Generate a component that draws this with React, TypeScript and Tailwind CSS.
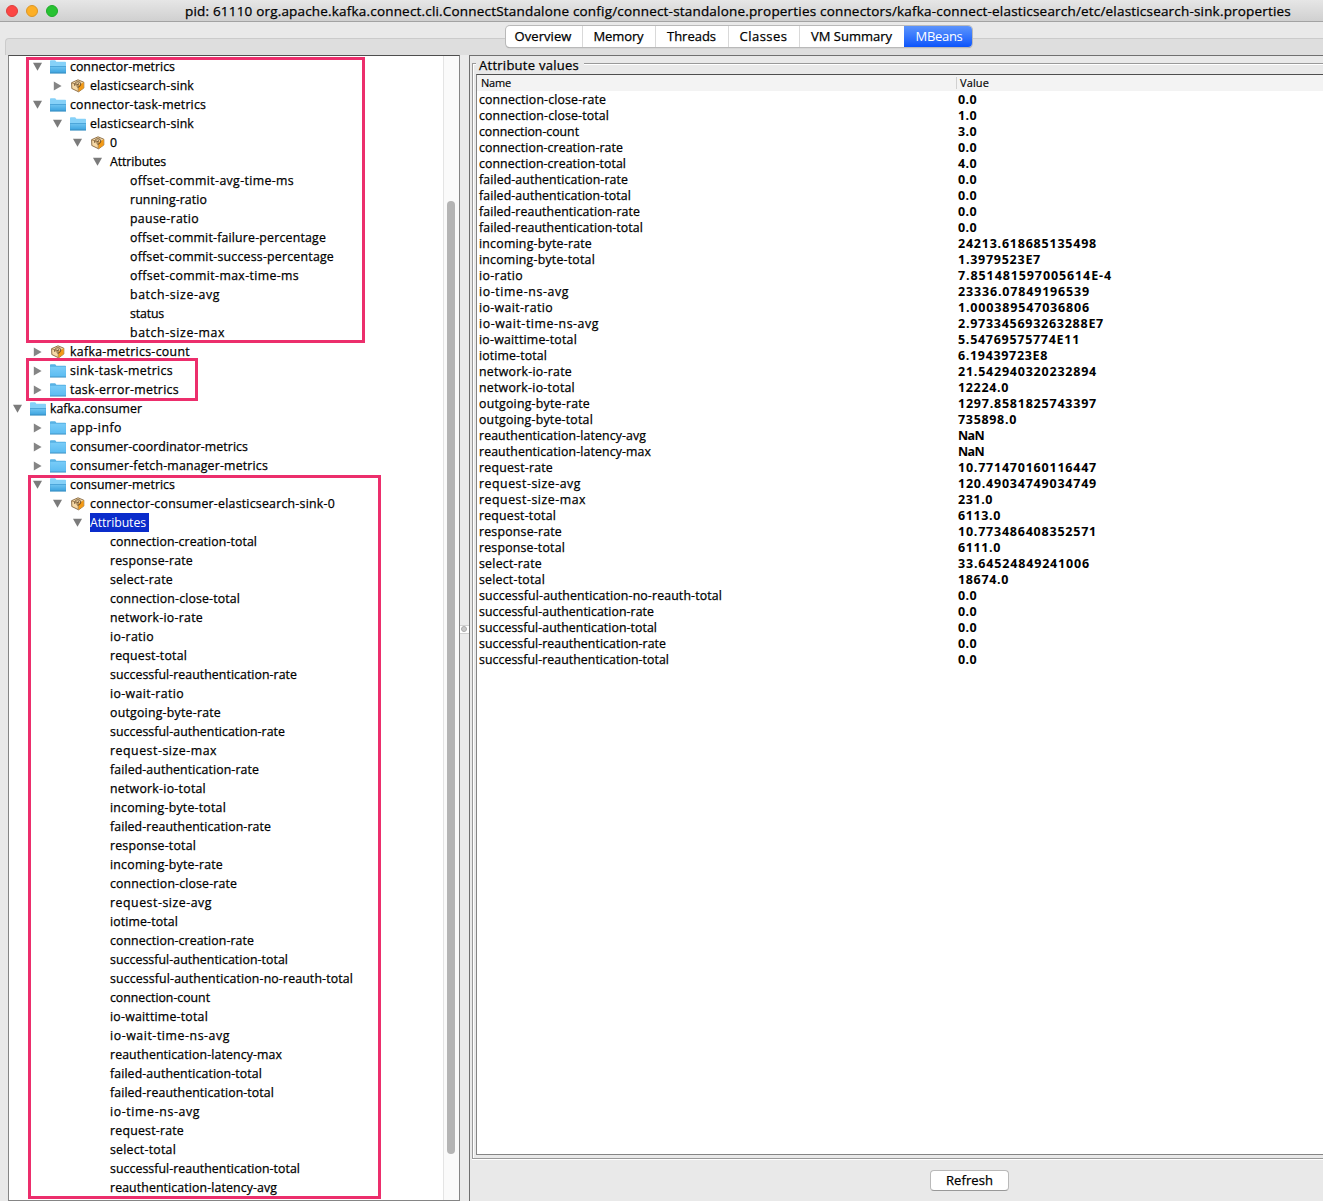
import { useLayoutEffect, useRef, useState } from "react";

type Icon = "open" | "closed" | "bean" | "none";
type Arrow = "down" | "right" | "none";

/* Text whose tracking is adjusted so that it fills the given width. */
function FitText({ text, width, className = "" }: { text: string; width: number; className?: string }) {
  const ref = useRef<HTMLSpanElement>(null);
  const [spacing, setSpacing] = useState(0);
  useLayoutEffect(() => {
    if (ref.current) {
      const natural = ref.current.getBoundingClientRect().width;
      setSpacing((width - natural) / text.length);
    }
  }, [text, width]);
  return (
    <span ref={ref} className={`whitespace-pre ${className}`} style={{ letterSpacing: `${spacing}px` }}>
      {text}
    </span>
  );
}

function Folder({ open }: { open: boolean }) {
  return (
    <svg width="16" height="14" viewBox="0 0 16 14" className="shrink-0">
      <defs>
        <linearGradient id="folderClosed" x1="0" y1="0" x2="0" y2="1">
          <stop offset="0" stopColor="#79ccf8" />
          <stop offset="1" stopColor="#5cbcf1" />
        </linearGradient>
        <linearGradient id="folderOpen" x1="0" y1="0" x2="0" y2="1">
          <stop offset="0" stopColor="#6cc2f0" />
          <stop offset="1" stopColor="#3fa5e0" />
        </linearGradient>
      </defs>
      <path d="M0 .9Q0 .2 .8 .2H5.2L6.4 1.7H15.2Q16 1.7 16 2.5V13.2H0Z" fill={open ? "#86d1f8" : "#58b2e4"} />
      {open ? (
        <>
          <path d="M0 6.2H16V13.2H0Z" fill="#3f9cd2" />
          <path d="M.2 7H15.8V12.6H.2Z" fill="url(#folderOpen)" />
        </>
      ) : (
        <path d="M.2 2.8H15.8V12.6H.2Z" fill="url(#folderClosed)" />
      )}
      <path d="M0 12.7H16V13.4H0Z" fill="#3687b8" />
    </svg>
  );
}

function Bean() {
  return (
    <svg width="14" height="14" viewBox="0 0 14 14" className="ml-px shrink-0">
      <path d="M.6 3.7 7 .8 12.8 3.2V9L7.6 12.8.8 9.5Z" fill="#f6d9a7" stroke="#76542a" strokeWidth=".8" strokeLinejoin="round" />
      <path d="M7.4 6.4 12.7 3.3V9L7.5 12.7Z" fill="#f39a16" />
      <path d="M.8 3.8 7.2 6.5V12.5" fill="none" stroke="#936a36" strokeWidth=".7" />
      <path d="M3.8 6.9C3.1 4.3 4.8 2.8 7 2.8s3.5 1.5 2.5 3.6c-.8 1.8-2.7 2.2-3.8 1.1" fill="none" stroke="#5b4326" strokeWidth=".9" />
      <path d="M5 4.8 8.4 6M8.4 3.7 5.8 6.6" stroke="#6b4f2e" strokeWidth=".8" />
    </svg>
  );
}

function Disclosure({ dir }: { dir: Arrow }) {
  return (
    <svg width="10" height="10" viewBox="0 0 10 10" className="shrink-0">
      {dir === "down" && <path d="M1 .8H10L5.5 8.8Z" fill="#7b7b7b" />}
      {dir === "right" && <path d="M1.8 .6V9.4L9.6 5Z" fill="#858585" />}
    </svg>
  );
}

/* [label x, label right edge, label, icon, arrow] */
const nodes: [number, number, string, Icon, Arrow][] = [
  [70, 175, "connector-metrics", "open", "down"],
  [90, 194, "elasticsearch-sink", "bean", "right"],
  [70, 206, "connector-task-metrics", "open", "down"],
  [90, 194, "elasticsearch-sink", "open", "down"],
  [110, 118, "0", "bean", "down"],
  [110, 166, "Attributes", "none", "down"],
  [130, 294, "offset-commit-avg-time-ms", "none", "none"],
  [130, 207, "running-ratio", "none", "none"],
  [130, 199, "pause-ratio", "none", "none"],
  [130, 326, "offset-commit-failure-percentage", "none", "none"],
  [130, 334, "offset-commit-success-percentage", "none", "none"],
  [130, 299, "offset-commit-max-time-ms", "none", "none"],
  [130, 220, "batch-size-avg", "none", "none"],
  [130, 164, "status", "none", "none"],
  [130, 225, "batch-size-max", "none", "none"],
  [70, 190, "kafka-metrics-count", "bean", "right"],
  [70, 173, "sink-task-metrics", "closed", "right"],
  [70, 179, "task-error-metrics", "closed", "right"],
  [50, 142, "kafka.consumer", "open", "down"],
  [70, 122, "app-info", "closed", "right"],
  [70, 248, "consumer-coordinator-metrics", "closed", "right"],
  [70, 268, "consumer-fetch-manager-metrics", "closed", "right"],
  [70, 175, "consumer-metrics", "open", "down"],
  [90, 335, "connector-consumer-elasticsearch-sink-0", "bean", "down"],
  [90, 146, "Attributes", "none", "down"],
  [110, 257, "connection-creation-total", "none", "none"],
  [110, 193, "response-rate", "none", "none"],
  [110, 173, "select-rate", "none", "none"],
  [110, 240, "connection-close-total", "none", "none"],
  [110, 203, "network-io-rate", "none", "none"],
  [110, 154, "io-ratio", "none", "none"],
  [110, 187, "request-total", "none", "none"],
  [110, 297, "successful-reauthentication-rate", "none", "none"],
  [110, 184, "io-wait-ratio", "none", "none"],
  [110, 221, "outgoing-byte-rate", "none", "none"],
  [110, 285, "successful-authentication-rate", "none", "none"],
  [110, 217, "request-size-max", "none", "none"],
  [110, 259, "failed-authentication-rate", "none", "none"],
  [110, 206, "network-io-total", "none", "none"],
  [110, 226, "incoming-byte-total", "none", "none"],
  [110, 271, "failed-reauthentication-rate", "none", "none"],
  [110, 196, "response-total", "none", "none"],
  [110, 223, "incoming-byte-rate", "none", "none"],
  [110, 237, "connection-close-rate", "none", "none"],
  [110, 212, "request-size-avg", "none", "none"],
  [110, 178, "iotime-total", "none", "none"],
  [110, 254, "connection-creation-rate", "none", "none"],
  [110, 288, "successful-authentication-total", "none", "none"],
  [110, 353, "successful-authentication-no-reauth-total", "none", "none"],
  [110, 210, "connection-count", "none", "none"],
  [110, 208, "io-waittime-total", "none", "none"],
  [110, 230, "io-wait-time-ns-avg", "none", "none"],
  [110, 282, "reauthentication-latency-max", "none", "none"],
  [110, 262, "failed-authentication-total", "none", "none"],
  [110, 274, "failed-reauthentication-total", "none", "none"],
  [110, 200, "io-time-ns-avg", "none", "none"],
  [110, 184, "request-rate", "none", "none"],
  [110, 176, "select-total", "none", "none"],
  [110, 300, "successful-reauthentication-total", "none", "none"],
  [110, 277, "reauthentication-latency-avg", "none", "none"],
];

/* [name, name width, value, value width] */
const values: [string, number, string, number][] = [
  ["connection-close-rate", 127, "0.0", 19],
  ["connection-close-total", 130, "1.0", 19],
  ["connection-count", 100, "3.0", 19],
  ["connection-creation-rate", 144, "0.0", 19],
  ["connection-creation-total", 147, "4.0", 19],
  ["failed-authentication-rate", 149, "0.0", 19],
  ["failed-authentication-total", 152, "0.0", 19],
  ["failed-reauthentication-rate", 161, "0.0", 19],
  ["failed-reauthentication-total", 164, "0.0", 19],
  ["incoming-byte-rate", 113, "24213.618685135498", 139],
  ["incoming-byte-total", 116, "1.3979523E7", 83],
  ["io-ratio", 44, "7.851481597005614E-4", 154],
  ["io-time-ns-avg", 90, "23336.07849196539", 132],
  ["io-wait-ratio", 74, "1.000389547036806", 132],
  ["io-wait-time-ns-avg", 120, "2.973345693263288E7", 146],
  ["io-waittime-total", 98, "5.54769575774E11", 122],
  ["iotime-total", 68, "6.19439723E8", 90],
  ["network-io-rate", 93, "21.542940320232894", 139],
  ["network-io-total", 96, "12224.0", 51],
  ["outgoing-byte-rate", 111, "1297.8581825743397", 139],
  ["outgoing-byte-total", 114, "735898.0", 59],
  ["reauthentication-latency-avg", 167, "NaN", 26],
  ["reauthentication-latency-max", 172, "NaN", 26],
  ["request-rate", 74, "10.771470160116447", 139],
  ["request-size-avg", 102, "120.49034749034749", 139],
  ["request-size-max", 107, "231.0", 35],
  ["request-total", 77, "6113.0", 43],
  ["response-rate", 83, "10.773486408352571", 139],
  ["response-total", 86, "6111.0", 43],
  ["select-rate", 63, "33.64524849241006", 132],
  ["select-total", 66, "18674.0", 51],
  ["successful-authentication-no-reauth-total", 243, "0.0", 19],
  ["successful-authentication-rate", 175, "0.0", 19],
  ["successful-authentication-total", 178, "0.0", 19],
  ["successful-reauthentication-rate", 187, "0.0", 19],
  ["successful-reauthentication-total", 190, "0.0", 19],
];

const tabs = [
  { label: "Overview", text: 57, cell: "w-[77px]" },
  { label: "Memory", text: 50, cell: "w-[73px] pl-px" },
  { label: "Threads", text: 49, cell: "w-[73px] pl-px" },
  { label: "Classes", text: 48, cell: "w-[71px] pl-px" },
  { label: "VM Summary", text: 81, cell: "w-[105px] pl-px" },
];

function TreeRow({ node, selected }: { node: (typeof nodes)[number]; selected: boolean }) {
  const [x, end, label, icon, arrow] = node;
  const lead = x - 9 - (icon === "none" ? 18 : 38);
  return (
    <div className="flex h-[19px] items-center" style={{ paddingLeft: lead }}>
      <Disclosure dir={arrow} />
      {icon !== "none" && (
        <span className="ml-2 flex w-5 items-center">{icon === "bean" ? <Bean /> : <Folder open={icon === "open"} />}</span>
      )}
      {icon === "none" && <span className="w-2 shrink-0" />}
      <span className={selected ? "flex h-[19px] w-[59px] items-center bg-[#0a2ccb] text-white [-webkit-text-stroke:0]" : "flex items-center"}>
        <FitText text={label} width={end - x} />
      </span>
    </div>
  );
}

export default function App() {
  return (
    <div className="flex h-[1201px] w-[1323px] flex-col overflow-hidden bg-[#e9e9e9] font-['Open_Sans',sans-serif] text-[12.3px] leading-4 text-black [-webkit-text-stroke:0.25px]">
      <header className="flex h-[22px] shrink-0 items-center border-b border-[#a3a3a3] bg-linear-to-b from-[#e6e6e6] to-[#d0d0d0] pl-1.5">
        <div className="flex w-[179px] gap-2">
          <span className="size-3 rounded-full border border-[#de3e3b] bg-[#fc4644]" />
          <span className="size-3 rounded-full border border-[#dc9625] bg-[#fdaf26]" />
          <span className="size-3 rounded-full border border-[#1eab29] bg-[#28c232]" />
        </div>
        <FitText
          className="pt-px text-[13.5px] leading-5"
          width={1106}
          text="pid: 61110 org.apache.kafka.connect.cli.ConnectStandalone config/connect-standalone.properties connectors/kafka-connect-elasticsearch/etc/elasticsearch-sink.properties"
        />
      </header>

      <div className="relative h-4 shrink-0">
        <nav className="absolute top-1 left-[506px] z-10 flex h-[21px] w-[466px] overflow-hidden rounded-[4px] bg-white text-[13px] shadow-[0_0_0_1px_#b9b9b9,0_1px_1px_#888]">
          {tabs.map((t) => (
            <div key={t.label} className={`flex shrink-0 items-center justify-center border-r border-[#d9d9d9] pr-0.5 pb-0.5 ${t.cell}`}>
              <FitText text={t.label} width={t.text} />
            </div>
          ))}
          <div className="-ml-px flex flex-1 items-center justify-center bg-linear-to-b from-[#5c94fc] to-[#0a53fb] pb-0.5 pl-0.5 text-white [-webkit-text-stroke:0]">
            <FitText text="MBeans" width={47} />
          </div>
        </nav>
      </div>

      <main className="ml-[5px] flex min-h-0 flex-1 flex-col rounded-tl-[4px] border-t border-l border-[#cbcbcb] bg-[#dedede] pt-4">
        <div className="-ml-px flex min-h-0 flex-1 bg-[#e9e9e9] pl-[3px]">
          <section className="relative flex h-[1146px] w-[452px] shrink-0 border border-[#858585] border-t-[#4e4e4e] bg-white">
            <div className="flex-1 pt-px">
              {nodes.map((n, i) => (
                <TreeRow key={i} node={n} selected={i === 24} />
              ))}
            </div>
            <div className="flex w-4 justify-center border-l border-[#e4e4e4] bg-[#fafafa] pt-[145px] pr-px">
              <span className="h-[953px] w-2 rounded-full bg-[#b4b4b4]" />
            </div>
            <div className="absolute top-px left-[17px] h-[286px] w-[339px] border-3 border-[#ec2e6c]" />
            <div className="absolute top-[302px] left-[17px] h-[43px] w-[172px] border-3 border-[#ec2e6c]" />
            <div className="absolute top-[419px] left-[19px] h-[724px] w-[353px] border-3 border-[#ec2e6c]" />
          </section>

          <div className="flex w-[9px] shrink-0 items-center justify-center bg-[#ebebeb] pt-0.5">
            <span className="flex h-[9px] w-[9px] items-center justify-center border-y border-[#d0d0d0] bg-white pr-px">
              <span className="size-1.5 rounded-full border border-[#a8a8a8] bg-[#c9c9c9]" />
            </span>
          </div>

          <section className="flex flex-1 flex-col border-t border-l border-[#707070] bg-[#e9e9e9] pl-0.5">
            <div className="relative mt-[7px] flex h-[1096px] flex-col border-y border-l border-[#999] bg-[#e9e9e9] pt-[10px] pb-[3px] pl-[3px] shadow-[inset_1px_1px_0_#fff,0_1px_0_#fff]">
              <div className="absolute -top-[7px] left-[3px] flex h-[15px] items-center bg-[#e9e9e9] pr-[5px] pl-[3px] text-[13px]">
                <FitText text="Attribute values" width={100} />
              </div>
              <div className="flex-1 border border-r-0 border-[#858585] border-t-[#4e4e4e] bg-white">
                <div className="flex h-4 items-center bg-[#f3f3f3] text-[11px] [-webkit-text-stroke:0.15px]">
                  <div className="flex w-[479px] pl-1">
                    <FitText text="Name" width={30} />
                  </div>
                  <div className="flex h-3 items-center border-l border-[#d0d0d0] pl-[3px]">
                    <FitText text="Value" width={29} />
                  </div>
                </div>
                <div className="pt-px">
                  {values.map(([name, nw, value, vw]) => (
                    <div key={name} className="flex h-4 items-center">
                      <div className="flex w-[481px] pl-0.5">
                        <FitText text={name} width={nw} />
                      </div>
                      <FitText className="text-[12.5px] font-bold [-webkit-text-stroke:0]" text={value} width={vw} />
                    </div>
                  ))}
                </div>
              </div>
            </div>
            <div className="flex pt-[11px] pl-[458px]">
              <button className="flex h-[21px] w-[79px] items-center justify-center rounded-[4px] border border-[#b9b9b9] border-b-[#999] bg-white pb-0.5 text-[13px]">
                <FitText text="Refresh" width={47} />
              </button>
            </div>
          </section>
        </div>
      </main>
    </div>
  );
}
